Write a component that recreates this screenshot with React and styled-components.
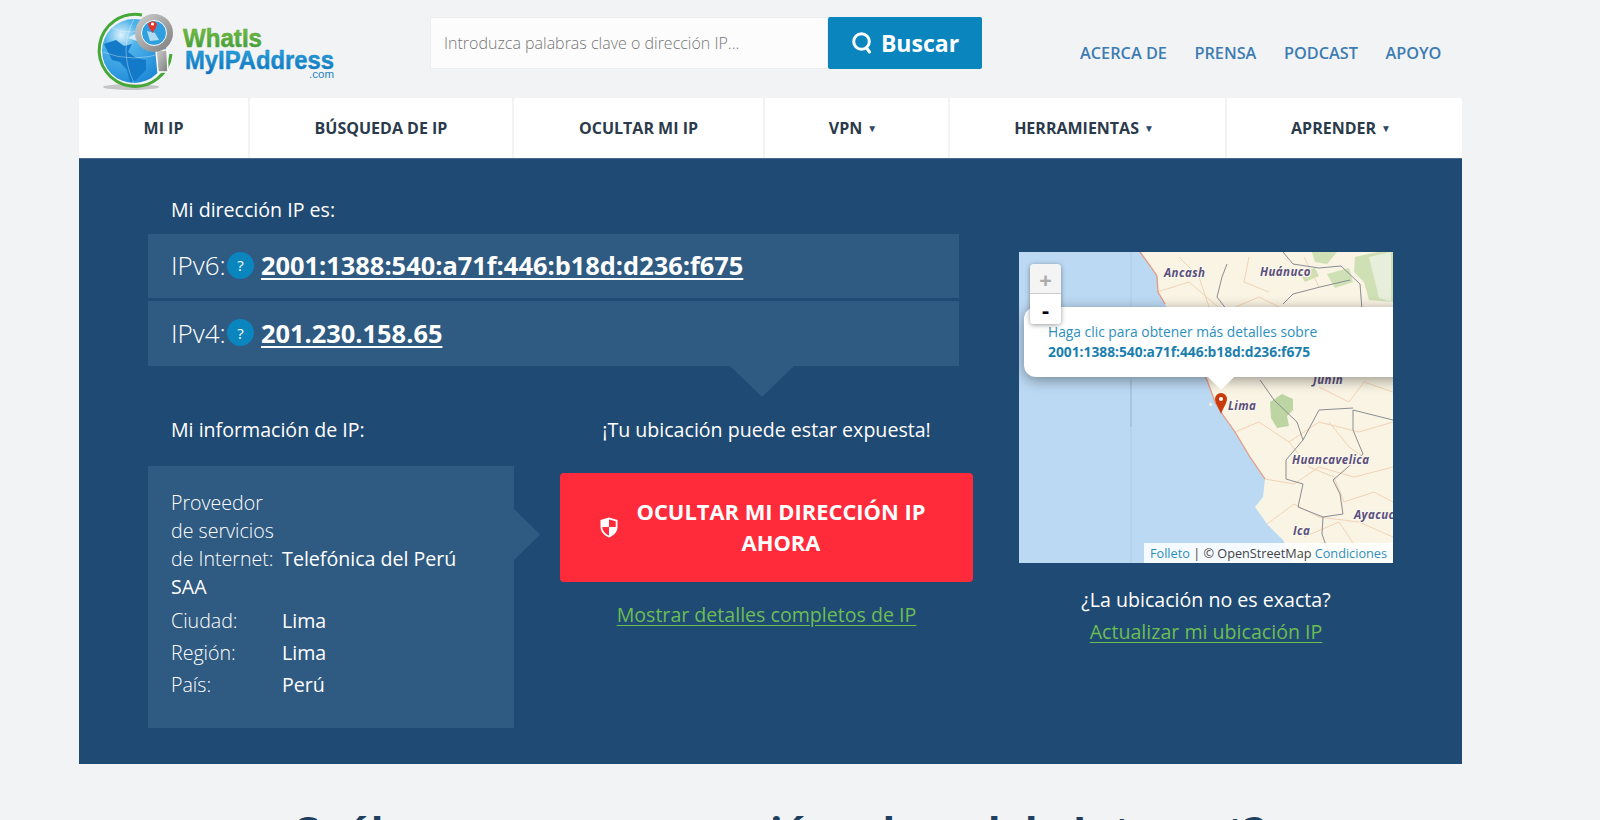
import React from "react";
import styled, {createGlobalStyle} from "styled-components";

const GlobalStyle = createGlobalStyle`
    html, body{
        margin: 0;
        padding: 0;
        height: 820px;
        overflow: hidden;
        background-color: #f2f3f5;
        font-family: "Open Sans", "Noto Sans", sans-serif;
    }
    *{
        box-sizing: border-box;
    }
`;

const Page = styled.div`
    width: 1383px;
    margin-left: 79px;
`;

const Header = styled.header`
    display: flex;
    align-items: flex-start;
    height: 98px;
    padding-left: 11px;
`;

const LogoBox = styled.svg`
    display: block;
    width: 250px;
    height: 82px;
    margin-top: 8px;
    flex: none;
`;

const SearchForm = styled.form`
    display: flex;
    width: 552px;
    height: 52px;
    margin-top: 17px;
    margin-left: 90px;
    flex: none;
`;

const SearchInput = styled.input`
    flex: 1;
    min-width: 0;
    height: 100%;
    padding: 0 13px;
    border: 1px solid #eeeeee;
    background-color: #fcfcfc;
    outline: none;
    font-family: inherit;
    font-size: 16px;
    font-weight: 300;

    &::placeholder{
        color: #777;
        opacity: 1;
    }
`;

const SearchButton = styled.button`
    display: flex;
    align-items: center;
    justify-content: center;
    gap: 8px;
    width: 154px;
    height: 100%;
    padding: 0;
    border: none;
    border-radius: 2px;
    background-color: #0a85bd;
    color: #fff;
    font-family: inherit;
    font-size: 23px;
    font-weight: 700;
`;

const TopLinks = styled.nav`
    display: flex;
    gap: 27.5px;
    margin-top: 41px;
    margin-left: 98px;
    flex: none;
`;

const TopLink = styled.a`
    color: #3d7cb3;
    font-size: 16.3px;
    font-weight: 600;
    line-height: 24px;
    white-space: nowrap;
`;

const MainNav = styled.nav`
    display: grid;
    grid-template-columns: 171px 264px 251px 185px 277px 235px;
    height: 60px;
    background-color: #fff;
`;

const NavItem = styled.a`
    display: flex;
    align-items: center;
    justify-content: center;
    gap: 5px;
    border-right: ${p => p.$last ? "none" : "2px solid #f2f3f5"};
    color: #2b3a4b;
    font-size: 16px;
    font-weight: 700;
    white-space: nowrap;
`;

const Caret = styled.span`
    margin-right: 7px;
    color: #2f4a66;
    font-size: 10px;
    line-height: 1;
`;

const Hero = styled.section`
    display: flex;
    gap: 46px;
    height: 606px;
    padding: 36px 0 0 69px;
    border-top: 1px solid #46698c;
    background-color: #1f4a73;
    color: #fff;
`;

const LeftColumn = styled.div`
    width: 825px;
    flex: none;
`;

const Label = styled.div`
    padding-left: ${p => p.$plain ? "0" : "23px"};
    font-size: 19.6px;
    line-height: 30px;
    text-align: ${p => p.$plain ? "center" : "left"};
`;

const IpPanel = styled.div`
    position: relative;
    display: flex;
    flex-direction: column;
    gap: 3px;
    width: 811px;
    margin-top: 9px;

    &:after{
        content: '';
        position: absolute;
        left: 582px;
        top: 100%;
        width: 64px;
        height: 31px;
        background-color: #2f5a82;
        clip-path: polygon(0 0, 100% 0, 50% 100%);
    }
`;

const IpRow = styled.div`
    display: flex;
    align-items: center;
    height: ${p => p.$h}px;
    padding: 0 0 2px 23px;
    background-color: #2f5a82;
`;

const IpName = styled.span`
    width: 56px;
    font-size: 26px;
    font-weight: 300;
`;

const HelpDot = styled.span`
    display: flex;
    align-items: center;
    justify-content: center;
    width: 27px;
    height: 27px;
    margin-right: 7px;
    border-radius: 50%;
    background-color: #0a85bd;
    font-size: 15px;
    font-weight: 400;
`;

const IpValue = styled.a`
    color: #fff;
    font-size: 25.4px;
    font-weight: 700;
    text-decoration: underline;
    text-decoration-thickness: 2px;
    text-underline-offset: 3px;
`;

const Lower = styled.div`
    display: flex;
    gap: 46px;
    margin-top: 49px;
`;

const InfoColumn = styled.div`
    width: 366px;
    flex: none;
`;

const InfoBox = styled.div`
    position: relative;
    height: 262px;
    margin-top: 21px;
    padding: 23px 30px 0 23px;
    background-color: #2f5a82;
    font-size: 19.6px;

    &:after{
        content: '';
        position: absolute;
        left: 100%;
        top: 43px;
        width: 26px;
        height: 51px;
        background-color: #2f5a82;
        clip-path: polygon(0 0, 100% 50%, 0 100%);
    }
`;

const ProviderRow = styled.div`
    line-height: 28px;
    margin-bottom: 4px;
`;

const ProviderLabel = styled.span`
    display: inline-block;
    width: 106px;
    font-weight: 300;
`;

const InfoRow = styled.div`
    display: flex;
    height: 32px;
    line-height: 32px;
`;

const InfoLabel = styled.span`
    width: 111px;
    font-weight: 300;
`;

const InfoValue = styled.span`
    font-weight: 500;
`;

const ActionColumn = styled.div`
    width: 413px;
    flex: none;
    text-align: center;
`;

const HideButton = styled.a`
    display: flex;
    align-items: center;
    gap: 13px;
    height: 109px;
    margin-top: 28px;
    padding-left: 40px;
    border-radius: 4px;
    background-color: #ff2a3a;
    color: #fff;
`;

const HideText = styled.span`
    width: 300px;
    padding-bottom: 2px;
    font-size: 21.9px;
    font-weight: 700;
    line-height: 31px;
    text-align: center;
`;

const GreenLink = styled.a`
    display: block;
    margin-top: ${p => p.$gap}px;
    color: #6cbd55;
    font-size: 19.6px;
    line-height: 30px;
    text-align: center;
    text-decoration: underline;
    text-underline-offset: 3px;
`;

const RightColumn = styled.div`
    width: 374px;
    flex: none;
    margin-top: 57px;
`;

const MapFrame = styled.div`
    position: relative;
    height: 311px;
    overflow: hidden;
    background-color: #bcd9f3;
`;

const MapArt = styled.svg`
    display: block;
    width: 374px;
    height: 311px;
`;

const MapLabel = styled.text`
    fill: #5b4f7d;
    stroke: #fbf8ec;
    stroke-width: 2.5px;
    paint-order: stroke;
    font-family: "Open Sans", sans-serif;
    font-size: 11.5px;
    font-style: italic;
    font-weight: 700;
    letter-spacing: 0.4px;
`;

const ZoomControl = styled.div`
    position: absolute;
    left: 11px;
    top: 12px;
    z-index: 3;
    display: flex;
    flex-direction: column;
    width: 31px;
    height: 60px;
    border-radius: 4px;
    overflow: hidden;
    box-shadow: 0 1px 5px rgba(0,0,0,0.4);
`;

const ZoomButton = styled.span`
    display: flex;
    align-items: center;
    justify-content: center;
    height: 30px;
    background-color: ${p => p.$off ? "#f4f4f4" : "#fff"};
    border-bottom: ${p => p.$off ? "1px solid #ccc" : "none"};
    color: ${p => p.$off ? "#aaa" : "#000"};
    font-size: 22px;
    font-weight: 700;
`;

const Popup = styled.div`
    position: absolute;
    left: 5px;
    right: -30px;
    top: 55px;
    z-index: 2;
    height: 70px;
    padding: 15px 0 0 24px;
    border-radius: 12px;
    background-color: #fff;
    box-shadow: 0 3px 14px rgba(0,0,0,0.4);
    color: #2b8fbe;
    font-size: 13.8px;
    line-height: 20px;

    &:after{
        content: '';
        position: absolute;
        left: 184px;
        top: 100%;
        width: 26px;
        height: 13px;
        background-color: #fff;
        clip-path: polygon(0 0, 100% 0, 50% 100%);
    }
`;

const PopupStrong = styled.div`
    color: #1a7fae;
    font-weight: 700;
`;

const Attribution = styled.div`
    position: absolute;
    right: 0;
    bottom: 0;
    z-index: 1;
    height: 20px;
    padding: 0 6px;
    background-color: rgba(255,255,255,0.85);
    color: #444;
    font-size: 12.7px;
    line-height: 20px;
    white-space: nowrap;
`;

const MapLink = styled.a`
    color: #2b8fbe;
`;

const MapNote = styled.div`
    margin-top: 22px;
    font-size: 19.6px;
    line-height: 30px;
    text-align: center;
`;

const SectionTitle = styled.h2`
    margin: 41px 0 0;
    padding-right: 4px;
    color: #1f3f60;
    font-size: 41.5px;
    font-weight: 700;
    line-height: 52px;
    text-align: center;
    white-space: nowrap;
`;

function Logo(){
    return <LogoBox viewBox="90 8 250 82">
        <defs>
            <radialGradient id="globeFill" cx="30%" cy="25%" r="85%">
                <stop offset="0" stopColor="#dff3fc"/>
                <stop offset="0.3" stopColor="#4fb3ea"/>
                <stop offset="1" stopColor="#1a86d6"/>
            </radialGradient>
            <linearGradient id="greenText" x1="0" y1="0" x2="0" y2="1">
                <stop offset="0" stopColor="#86c440"/>
                <stop offset="1" stopColor="#37963a"/>
            </linearGradient>
            <linearGradient id="blueText" x1="0" y1="0" x2="0" y2="1">
                <stop offset="0" stopColor="#2aa9e3"/>
                <stop offset="1" stopColor="#0f6db6"/>
            </linearGradient>
            <linearGradient id="steel" x1="0" y1="0" x2="1" y2="1">
                <stop offset="0" stopColor="#cfcfcf"/>
                <stop offset="1" stopColor="#7d7d7d"/>
            </linearGradient>
        </defs>
        <ellipse cx="131" cy="87" rx="28" ry="3" fill="#8f8f8f" opacity="0.45"/>
        <path d="M142 15 A36 36 0 1 0 171 54" fill="none" stroke="#46a838" strokeWidth="3"/>
        <circle cx="134" cy="51" r="32" fill="url(#globeFill)"/>
        <path d="M104 44 L116 40 L124 46 L132 44 L128 52 L136 58 L146 60 L146 70 L136 80 L130 82 L127 70 L120 62 L112 60 Z" fill="#127ac8"/>
        <path d="M128 38 L140 42 L146 36 L138 32 Z" fill="#e8f5fc" opacity="0.8"/>
        <path d="M103 52 Q133 64 166 52 M134 19 Q118 50 134 83 M112 28 Q134 38 150 24" fill="none" stroke="#fff" strokeWidth="0.7" opacity="0.5"/>
        <path d="M156 50 L167 50 L168 72 L158 72 Z" fill="url(#steel)" stroke="#fff" strokeWidth="1.5"/>
        <circle cx="154" cy="33" r="19" fill="url(#steel)"/>
        <circle cx="154" cy="33" r="12.5" fill="#2f9fe0" stroke="#fff" strokeWidth="1"/>
        <path d="M147 31 L155 33 L159 40 L150 41 Z" fill="#cfeaf8" opacity="0.8"/>
        <path d="M148 24 a5 5 0 0 1 9 0 c0 3 -3 6 -4.5 9 c-1.5 -3 -4.5 -6 -4.5 -9 Z" fill="#e0352b"/>
        <circle cx="152.5" cy="24" r="1.6" fill="#fff"/>
        <text x="183" y="47" fill="url(#greenText)" stroke="#4ea736" strokeWidth="0.5" fontFamily="Liberation Sans" fontSize="26" fontWeight="700" textLength="79" lengthAdjust="spacingAndGlyphs">WhatIs</text>
        <text x="185" y="69" fill="url(#blueText)" stroke="#1e8ccf" strokeWidth="0.5" fontFamily="Liberation Sans" fontSize="26" fontWeight="700" textLength="149" lengthAdjust="spacingAndGlyphs">MyIPAddress</text>
        <text x="309" y="78" fill="#1d83c6" fontFamily="Liberation Sans" fontSize="11" textLength="25" lengthAdjust="spacingAndGlyphs">.com</text>
    </LogoBox>;
}

function SearchIcon(){
    return <svg width="22" height="22" viewBox="0 0 22 22" fill="none" stroke="#fff" strokeWidth="3" strokeLinecap="round">
        <circle cx="10.5" cy="9.5" r="7.8"/>
        <path d="M15.5 16 L18.5 20"/>
    </svg>;
}

function ShieldIcon(){
    return <svg width="18" height="21" viewBox="0 0 18 21" style={{flex: 'none'}}>
        <path d="M9 0.5 L17.5 3 V10 C17.5 15 13.5 18.8 9 20.5 C4.5 18.8 0.5 15 0.5 10 V3 Z" fill="#fff"/>
        <path d="M9 2.4 L15.7 4.3 V10 H9 Z M9 10 V18.6 C5.6 17.2 2.6 14.2 2.3 10 Z" fill="#ff2a3a"/>
    </svg>;
}

// map art is drawn in frame coordinates, 374x311
function MapDrawing(){
    return <MapArt viewBox="0 0 374 311">
        <rect width="374" height="311" fill="#bcd9f3"/>
        <path d="M112 0 V311" stroke="#aecbe6" strokeWidth="1"/>
        <path d="M112 128 V175" stroke="#9db9d4" strokeWidth="1"/>
        <path d="M121 0 L132 15 L138 24 L139 40 L146 52 L151 62 L172 100 L188 128 L196 150 L204 163 L216 180 L231 205 L246 227 L244 245 L236 255 L248 272 L264 288 L274 311 H374 V0 Z" fill="#f9f4e3"/>
        <path d="M191 150 L194 153 L190 154 Z" fill="#f9f4e3"/>
        <g fill="#cfe0b4">
            <path d="M293 0 L318 0 L308 12 L296 10 Z"/>
            <path d="M336 5 L358 0 L374 0 L374 50 L350 48 L345 30 L335 20 Z"/>
            <path d="M280 20 L296 16 L300 24 L286 30 Z"/>
            <path d="M308 22 L330 16 L334 30 L316 36 Z"/>
            <path d="M251 150 L263 142 L274 147 L274 158 L268 164 L270 174 L258 176 L252 166 Z" fill="#bcd5a2"/>
        </g>
        <path d="M350 5 L372 0 V50 L360 46 Z" fill="#e8eedc"/>
        <g fill="none" stroke="#f3d3b5" strokeWidth="1">
            <path d="M138 40 L170 30 L205 60 L240 45 L270 60"/>
            <path d="M160 5 L180 25 L190 55 M230 5 L225 30 L250 40 M285 5 L300 35"/>
            <path d="M216 180 L240 170 L270 190 L300 170 L340 180 L374 170"/>
            <path d="M246 227 L275 232 L300 215 L335 225 L374 215"/>
            <path d="M270 190 L290 215 L315 225 L325 250 L355 240 L374 250"/>
            <path d="M248 272 L275 252 L300 265 L340 270 L374 285"/>
            <path d="M300 135 L330 150 L345 130 L374 140 M310 170 L330 195 L345 205"/>
            <path d="M285 285 L320 270 L340 300"/>
        </g>
        <g fill="none" stroke="#8c8c94" strokeWidth="1">
            <path d="M208 12 L203 25 L198 45 L208 58"/>
            <path d="M264 0 L274 12 L300 16 L322 14 L341 32 L343 58"/>
            <path d="M264 52 L274 42 L301 35 L331 28"/>
            <path d="M241 128 L255 148 L278 170 L284 188 L267 208 L267 227 L284 232 L279 255 L304 265 L324 262 L321 242 L314 228 L344 202 L334 178 L334 158 L374 168"/>
            <path d="M284 188 L300 158 L334 156"/>
            <path d="M304 265 L303 282 L311 305"/>
        </g>
        <path d="M121 0 L132 15 L138 24 L139 40 L146 52 M172 100 L188 128 L196 150 L204 163 L216 180 L231 205 L246 227" fill="none" stroke="#e59a84" strokeWidth="1.3"/>
        <MapLabel x="145" y="25">Ancash</MapLabel>
        <MapLabel x="241" y="24">Huánuco</MapLabel>
        <MapLabel x="294" y="132">Junín</MapLabel>
        <MapLabel x="209" y="158">Lima</MapLabel>
        <MapLabel x="273" y="212">Huancavelica</MapLabel>
        <MapLabel x="335" y="267">Ayacucho</MapLabel>
        <MapLabel x="274" y="283">Ica</MapLabel>
        <path d="M196 147 a6 6 0 0 1 12 0 c0 4 -4 9 -6 15 c-2 -6 -6 -11 -6 -15 Z" fill="#c93a0c"/>
        <circle cx="202" cy="147" r="2" fill="#fff"/>
    </MapArt>;
}

export default function App(){
    return <Page>
        <GlobalStyle/>
        <Header>
            <Logo/>
            <SearchForm>
                <SearchInput placeholder="Introduzca palabras clave o dirección IP..."/>
                <SearchButton type="button"><SearchIcon/>Buscar</SearchButton>
            </SearchForm>
            <TopLinks>
                <TopLink>ACERCA DE</TopLink>
                <TopLink>PRENSA</TopLink>
                <TopLink>PODCAST</TopLink>
                <TopLink>APOYO</TopLink>
            </TopLinks>
        </Header>
        <MainNav>
            <NavItem>MI IP</NavItem>
            <NavItem>BÚSQUEDA DE IP</NavItem>
            <NavItem>OCULTAR MI IP</NavItem>
            <NavItem>VPN <Caret>▼</Caret></NavItem>
            <NavItem>HERRAMIENTAS <Caret>▼</Caret></NavItem>
            <NavItem $last>APRENDER <Caret>▼</Caret></NavItem>
        </MainNav>
        <Hero>
            <LeftColumn>
                <Label>Mi dirección IP es:</Label>
                <IpPanel>
                    <IpRow $h={64}>
                        <IpName>IPv6:</IpName>
                        <HelpDot>?</HelpDot>
                        <IpValue>2001:1388:540:a71f:446:b18d:d236:f675</IpValue>
                    </IpRow>
                    <IpRow $h={65}>
                        <IpName>IPv4:</IpName>
                        <HelpDot>?</HelpDot>
                        <IpValue>201.230.158.65</IpValue>
                    </IpRow>
                </IpPanel>
                <Lower>
                    <InfoColumn>
                        <Label>Mi información de IP:</Label>
                        <InfoBox>
                            <ProviderRow>
                                <ProviderLabel>Proveedor de servicios de Internet:</ProviderLabel>{' '}
                                <InfoValue>Telefónica del Perú SAA</InfoValue>
                            </ProviderRow>
                            <InfoRow><InfoLabel>Ciudad:</InfoLabel><InfoValue>Lima</InfoValue></InfoRow>
                            <InfoRow><InfoLabel>Región:</InfoLabel><InfoValue>Lima</InfoValue></InfoRow>
                            <InfoRow><InfoLabel>País:</InfoLabel><InfoValue>Perú</InfoValue></InfoRow>
                        </InfoBox>
                    </InfoColumn>
                    <ActionColumn>
                        <Label $plain>¡Tu ubicación puede estar expuesta!</Label>
                        <HideButton>
                            <ShieldIcon/>
                            <HideText>OCULTAR MI DIRECCIÓN IP AHORA</HideText>
                        </HideButton>
                        <GreenLink $gap={18}>Mostrar detalles completos de IP</GreenLink>
                    </ActionColumn>
                </Lower>
            </LeftColumn>
            <RightColumn>
                <MapFrame>
                    <MapDrawing/>
                    <ZoomControl>
                        <ZoomButton $off>+</ZoomButton>
                        <ZoomButton>-</ZoomButton>
                    </ZoomControl>
                    <Popup>
                        Haga clic para obtener más detalles sobre
                        <PopupStrong>2001:1388:540:a71f:446:b18d:d236:f675</PopupStrong>
                    </Popup>
                    <Attribution>
                        <MapLink>Folleto</MapLink> | © OpenStreetMap <MapLink>Condiciones</MapLink>
                    </Attribution>
                </MapFrame>
                <MapNote>¿La ubicación no es exacta?</MapNote>
                <GreenLink $gap={2}>Actualizar mi ubicación IP</GreenLink>
            </RightColumn>
        </Hero>
        <SectionTitle>¿Cuál es su nueva conexión a la red de Internet?</SectionTitle>
    </Page>;
}
